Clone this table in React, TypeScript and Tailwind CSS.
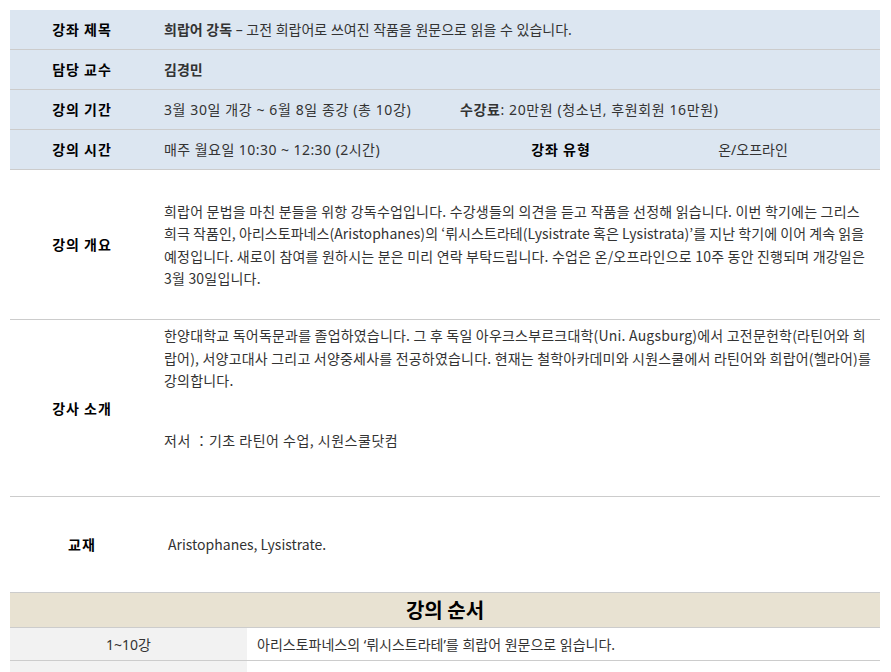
const font = { fontFamily: '"Noto Sans CJK KR", "Noto Sans", sans-serif' };
const topFont = { fontFamily: '"Noto Sans", "Noto Sans CJK KR", sans-serif' };

const InfoRow = ({ label, wide, children }: { label: string; wide?: boolean; children: React.ReactNode }) => (
  <div className="flex h-[40px] items-center border-b border-[#cccccc] bg-[#dce6f1]">
    <div className="w-[144px] shrink-0 text-center font-bold tracking-[1px] text-black">{label}</div>
    <div className={wide ? "flex-1 pl-[10px] tracking-[0.6px] text-[#333333]" : "flex-1 pl-[10px] text-[#333333]"} style={topFont}>
      {children}
    </div>
  </div>
);

export default function App() {
  return (
    <div className="min-h-screen bg-white p-[10px] text-[14px]" style={font}>
      <div className="w-[870px]">
        <InfoRow label="강좌 제목">
          <b>희랍어 강독</b> – 고전 희랍어로 쓰여진 작품을 원문으로 읽을 수 있습니다.
        </InfoRow>
        <InfoRow label="담당 교수">
          <b>김경민</b>
        </InfoRow>
        <InfoRow label="강의 기간" wide>
          <span className="inline-block w-[296px]">3월 30일 개강 ~ 6월 8일 종강 (총 10강)</span>
          <b>수강료</b>: 20만원 (청소년, 후원회원 16만원)
        </InfoRow>
        <div className="flex h-[40px] items-center border-b border-[#cccccc] bg-[#dce6f1]">
          <div className="w-[144px] shrink-0 text-center font-bold tracking-[1px] text-black">강의 시간</div>
          <div className="w-[342px] shrink-0 pl-[10px] tracking-[0.45px] text-[#333333]" style={topFont}>
            매주 월요일 10:30 ~ 12:30 (2시간)
          </div>
          <div className="w-[130px] shrink-0 text-center font-bold tracking-[1px] text-black">강좌 유형</div>
          <div className="flex-1 text-center text-[#333333]" style={topFont}>
            온/오프라인
          </div>
        </div>

        {/* 강의 개요 */}
        <div className="flex h-[150px] items-center border-b border-[#cccccc]">
          <div className="w-[144px] shrink-0 text-center font-bold tracking-[1px] text-black">강의 개요</div>
          <p className="flex-1 whitespace-nowrap pl-[10px] leading-[22.5px] tracking-[0.2px] text-[#333333]">
            희랍어 문법을 마친 분들을 위항 강독수업입니다. 수강생들의 의견을 듣고 작품을 선정해 읽습니다. 이번 학기에는 그리스
            <br />
            <span className="tracking-[0.05px]">
              희극 작품인, 아리스토파네스(Aristophanes)의 ‘뤼시스트라테(Lysistrate 혹은 Lysistrata)’를 지난 학기에 이어 계속 읽을
            </span>
            <br />
            예정입니다. 새로이 참여를 원하시는 분은 미리 연락 부탁드립니다. 수업은 온/오프라인으로 10주 동안 진행되며 개강일은
            <br />
            3월 30일입니다.
          </p>
        </div>

        {/* 강사 소개 */}
        <div className="flex h-[177px] items-center border-b border-[#cccccc]">
          <div className="w-[144px] shrink-0 text-center font-bold tracking-[1px] text-black">강사 소개</div>
          <div className="flex h-full flex-1 flex-col whitespace-nowrap pl-[10px] pt-[4px] leading-[22.5px] tracking-[0.2px] text-[#333333]">
            <p>
              한양대학교 독어독문과를 졸업하였습니다. 그 후 독일 아우크스부르크대학(Uni. Augsburg)에서 고전문헌학(라틴어와 희
              <br />
              랍어), 서양고대사 그리고 서양중세사를 전공하였습니다. 현재는 철학아카데미와 시원스쿨에서 라틴어와 희랍어(헬라어)를
              <br />
              강의합니다.
            </p>
            <p className="mt-[37px] tracking-[0.5px]">저서 ：기초 라틴어 수업, 시원스쿨닷컴</p>
          </div>
        </div>

        <div className="flex h-[95px] items-center">
          <div className="w-[144px] shrink-0 text-center font-bold tracking-[1px] text-black">교재</div>
          <div className="flex-1 pl-[14px] text-[#333333]">Aristophanes, Lysistrate.</div>
        </div>

        {/* 강의 순서 */}
        <div className="flex h-[36px] items-center justify-center border-y border-[#cccccc] bg-[#e8e2d2] text-[20px] font-bold text-black">
          강의 순서
        </div>
        <div className="grid h-[33px] grid-cols-[237px_1fr] border-b border-[#cccccc]">
          <div className="flex items-center justify-center bg-[#f2f2f2] text-[#333333]" style={topFont}>
            1~10강
          </div>
          <div className="flex items-center pl-[10px] text-[#333333]" style={topFont}>
            아리스토파네스의 ‘뤼시스트라테’를 희랍어 원문으로 읽습니다.
          </div>
        </div>
        <div className="grid h-[33px] grid-cols-[237px_1fr] border-b border-[#cccccc]">
          <div className="bg-[#f2f2f2]" />
          <div />
        </div>
      </div>
    </div>
  );
}
